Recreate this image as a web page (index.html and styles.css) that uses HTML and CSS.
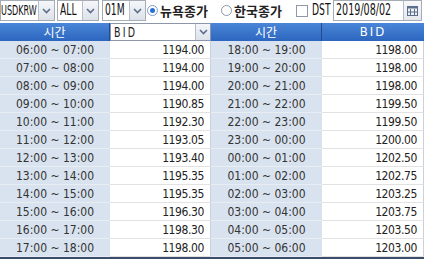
FILE: index.html
```html
<!DOCTYPE html>
<html>
<head>
<meta charset="utf-8">
<link rel="stylesheet" href="styles.css">
</head>
<body>
<div class="app">
  <div class="toolbar">
    <div class="sel w1"><span class="val"><span class="nar n1">USDKRW</span></span><span class="btn"><svg width="9" height="6" viewBox="0 0 9 6"><path d="M1 1 L4.5 4.5 L8 1" fill="none" stroke="#5a6e8c" stroke-width="1.6"/></svg></span></div>
    <div class="sel w2"><span class="val"><span class="nar">ALL</span></span><span class="btn"><svg width="9" height="6" viewBox="0 0 9 6"><path d="M1 1 L4.5 4.5 L8 1" fill="none" stroke="#5a6e8c" stroke-width="1.6"/></svg></span></div>
    <div class="sel w3"><span class="val"><span class="nar">01M</span></span><span class="btn"><svg width="9" height="6" viewBox="0 0 9 6"><path d="M1 1 L4.5 4.5 L8 1" fill="none" stroke="#5a6e8c" stroke-width="1.6"/></svg></span></div>
    <label class="opt o1"><span class="radio on"></span><span class="ko">뉴욕종가</span></label>
    <label class="opt o2"><span class="radio"></span><span class="ko">한국종가</span></label>
    <label class="opt dst"><span class="check"></span><span class="nar lat">DST</span></label>
    <div class="date"><span class="val"><span class="nar dv">2019/08/02</span></span><span class="cal"><svg width="11" height="10" viewBox="0 0 11 10"><rect x="0.5" y="0.5" width="10" height="9" fill="none" stroke="#5a6e8c"/><rect x="0.5" y="0.5" width="10" height="2" fill="#5a6e8c"/><path d="M3.5 3 V9.5 M7.5 3 V9.5 M0.5 6 H10.5" stroke="#5a6e8c" stroke-width="1"/></svg></span></div>
  </div>
  <div class="grid">
    <div class="hd">시간</div>
    <div class="hsel"><span class="val"><span class="nar hb">BID</span></span><span class="btn"><svg width="9" height="6" viewBox="0 0 9 6"><path d="M1 1 L4.5 4.5 L8 1" fill="none" stroke="#5a6e8c" stroke-width="1.6"/></svg></span></div>
    <div class="hd">시간</div>
    <div class="hd bid">BID</div>

    <div class="t">06:00 ~ 07:00</div><div class="v">1194.00</div><div class="t">18:00 ~ 19:00</div><div class="v">1198.00</div>
    <div class="t">07:00 ~ 08:00</div><div class="v">1194.00</div><div class="t">19:00 ~ 20:00</div><div class="v">1198.00</div>
    <div class="t">08:00 ~ 09:00</div><div class="v">1194.00</div><div class="t">20:00 ~ 21:00</div><div class="v">1198.00</div>
    <div class="t">09:00 ~ 10:00</div><div class="v">1190.85</div><div class="t">21:00 ~ 22:00</div><div class="v">1199.50</div>
    <div class="t">10:00 ~ 11:00</div><div class="v">1192.30</div><div class="t">22:00 ~ 23:00</div><div class="v">1199.50</div>
    <div class="t">11:00 ~ 12:00</div><div class="v">1193.05</div><div class="t">23:00 ~ 00:00</div><div class="v">1200.00</div>
    <div class="t">12:00 ~ 13:00</div><div class="v">1193.40</div><div class="t">00:00 ~ 01:00</div><div class="v">1202.50</div>
    <div class="t">13:00 ~ 14:00</div><div class="v">1195.35</div><div class="t">01:00 ~ 02:00</div><div class="v">1202.75</div>
    <div class="t">14:00 ~ 15:00</div><div class="v">1195.35</div><div class="t">02:00 ~ 03:00</div><div class="v">1203.25</div>
    <div class="t">15:00 ~ 16:00</div><div class="v">1196.30</div><div class="t">03:00 ~ 04:00</div><div class="v">1203.75</div>
    <div class="t">16:00 ~ 17:00</div><div class="v">1198.30</div><div class="t">04:00 ~ 05:00</div><div class="v">1203.50</div>
    <div class="t">17:00 ~ 18:00</div><div class="v">1198.00</div><div class="t">05:00 ~ 06:00</div><div class="v">1203.00</div>
  </div>
</div>
</body>
</html>
```
FILE: styles.css
```css
* { box-sizing: border-box; }
html, body { margin: 0; padding: 0; background: #ffffff; }
.app { width: 424px; height: 259px; overflow: hidden; background: #ffffff; }
.toolbar {
  height: 23px;
  display: flex;
  align-items: flex-start;
  font-family: "DejaVu Sans Condensed", "DejaVu Sans", sans-serif;
  font-size: 15px;
  color: #111;
}
.nar {
  display: inline-block;
  transform: scaleX(0.68);
  transform-origin: left center;
  white-space: nowrap;
}
.n1 { font-size: 14px; transform: scaleX(0.64); }
.sel {
  height: 21px;
  display: flex;
  border: 1px solid #a5acb5;
  background: #fff;
}
.sel .val, .date .val { flex: 1; padding-left: 1px; line-height: 19px; white-space: nowrap; min-width: 0; }
.btn, .cal {
  width: 16px;
  height: 19px;
  flex: none;
  background: linear-gradient(#f4f6f9, #dde2ea);
  border-left: 1px solid #b8bec8;
  display: flex;
  align-items: center;
  justify-content: center;
}
.w1 { width: 55px; margin-right: 2px; }
.w1 .val { padding-left: 0; }
.w2 { width: 42px; margin-right: 3px; }
.w2 .val { padding-left: 2px; }
.w3 { width: 44px; margin-right: 1px; }
.w3 .val { padding-left: 2px; }
.opt { display: flex; align-items: center; height: 21px; }
.o1 { width: 74px; }
.o2 { width: 75px; }
.radio {
  width: 11px; height: 11px; border-radius: 50%;
  border: 1px solid #8f98a6; background: #fff;
  margin-right: 2px; position: relative; flex: none;
}
.radio.on { border-color: #7d9ccc; }
.radio.on::after {
  content: ""; position: absolute; left: 2px; top: 2px;
  width: 5px; height: 5px; border-radius: 50%; background: #2a6fd6;
}
.ko {
  font-family: "Noto Sans CJK KR", sans-serif;
  font-weight: bold; font-size: 13px; color: #222;
}
.dst { width: 37px; }
.check { width: 12px; height: 12px; border: 1px solid #8f98a6; background: #fff; margin-right: 4px; flex: none; }
.lat { font-size: 15px; line-height: 21px; }
.date {
  width: 89px; height: 21px; display: flex;
  border: 1px solid #a5acb5; background: #fff;
}
.date .val { padding-left: 2px; }
.dv { transform: scaleX(0.71); }
.cal { width: 18px; background: linear-gradient(#f7f8fa, #e4e8ee); }

.grid {
  display: grid;
  grid-template-columns: 110px 101px 111px 102px;
  grid-template-rows: 18px repeat(12, 18px);
  font-family: "DejaVu Sans Condensed", "DejaVu Sans", sans-serif;
  font-size: 12px;
  color: #222;
  border-bottom: 2px solid #3a4d6a;
}
.hd {
  background: linear-gradient(#4a86d8, #2c66bf);
  color: #fff;
  text-align: center;
  line-height: 18px;
  font-family: "Noto Sans CJK KR", sans-serif;
  font-size: 12px;
  border-right: 1px solid #1f4c91;
}
.hd.bid { font-family: "DejaVu Sans Condensed", sans-serif; font-size: 13px; letter-spacing: 2px; border-right: none; }
.hsel {
  display: flex; background: #fff; border: 1px solid #8b96a6;
}
.hsel .val { flex: 1; padding-left: 3px; line-height: 16px; font-size: 14px; }
.hb { letter-spacing: 3px; transform: scaleX(0.75); }
.hsel .btn { height: 16px; width: 15px; }
.t {
  background: #d9e3ef;
  text-align: center;
  line-height: 18px;
  border-bottom: 1px solid #e8edf4;
  color: #333;
}
.v {
  background: #fff;
  text-align: right;
  padding-right: 6px;
  line-height: 18px;
  border-bottom: 1px solid #e2e2e2;
  border-right: 1px solid #c9d1dc;
  letter-spacing: -0.4px;
  color: #222;
}
```
